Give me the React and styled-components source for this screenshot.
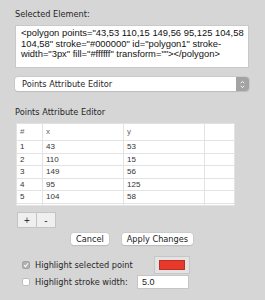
import React from 'react'
import styled, { createGlobalStyle } from 'styled-components'

const Global = createGlobalStyle`
  html, body {
    margin: 0;
    padding: 0;
    background: #d6d6d6;
  }
`

const Panel = styled.div`
  width: 265px;
  height: 300px;
  box-sizing: border-box;
  padding: 9px 16px 0 15px;
  display: flex;
  flex-direction: column;
  font-family: "DejaVu Sans", sans-serif;
  font-size: 8.2px;
  color: #262626;
  overflow: hidden;
`

const Label = styled.div`
  height: 10px;
  line-height: 10px;
  margin-top: ${props => props.top || 0}px;
`

const CodeBox = styled.div`
  margin-top: 6px;
  height: 43px;
  box-sizing: border-box;
  background: #fff;
  border: 1px solid #c9c9c9;
  padding: 2px 4px 0 5px;
  font-family: "Liberation Sans", Arial, sans-serif;
  font-size: 9.4px;
  line-height: 10.7px;
  color: #111;
  word-break: break-word;
`

const Select = styled.div`
  margin-top: 9px;
  height: 14px;
  display: flex;
  background: #fff;
  border-radius: 3px;
  box-shadow: 0 0 0 0.5px #bdbdbd, 0 1px 1px rgba(0,0,0,0.12);
  overflow: hidden;
`

const SelectText = styled.div`
  flex: 1;
  line-height: 14px;
  padding-left: 7px;
`

const Stepper = styled.div`
  width: 13px;
  background: #a3a3a3;
  display: flex;
  align-items: center;
  justify-content: center;
`

const TableWrap = styled.div`
  margin: 7px 0 0 2px;
  width: 217px;
  height: 81px;
  overflow: hidden;
  background: #fff;
  box-shadow: 0 0 0 1px #e2e2e2;
`

const Row = styled.div`
  display: grid;
  grid-template-columns: 26px 81px 81px 29px;
  height: ${props => (props.head ? 17 : 12.5)}px;
  box-sizing: border-box;
  border-bottom: ${props => (props.head ? 1.5 : 1.5)}px solid #e3e3e3;
`

const Cell = styled.div`
  padding-left: 3px;
  border-right: ${props => (props.last ? 0 : 1.5)}px solid #e3e3e3;
  font-family: "Liberation Sans", Arial, sans-serif;
  font-size: 8px;
  color: ${props => (props.head ? '#666' : '#333')};
  line-height: ${props => (props.head ? 16 : 11)}px;
`

const PlusMinus = styled.div`
  margin: 7px 0 0 2px;
  display: flex;
`

const SquareButton = styled.div`
  width: 20px;
  height: 16px;
  box-sizing: border-box;
  background: #efefef;
  border: 1px solid #c4c4c4;
  margin-left: ${props => (props.joined ? -1 : 0)}px;
  display: flex;
  align-items: center;
  justify-content: center;
  font-family: "Liberation Sans", Arial, sans-serif;
  font-size: 10px;
  color: #333;
`

const Actions = styled.div`
  margin-top: 5px;
  display: flex;
  justify-content: center;
  gap: 13px;
`

const Button = styled.div`
  height: 12px;
  padding: 0 ${props => props.pad}px;
  background: #fff;
  border-radius: 3px;
  box-shadow: 0 0 0 0.5px #c2c2c2, 0 1px 1px rgba(0,0,0,0.15);
  line-height: 12px;
  font-size: 8.2px;
  color: #222;
`

const OptionRow = styled.div`
  margin-top: ${props => props.top}px;
  margin-left: 7px;
  height: ${props => props.h}px;
  display: flex;
  align-items: center;
`

const Check = styled.div`
  width: 8px;
  height: 8px;
  box-sizing: border-box;
  border-radius: 2px;
  background: ${props => (props.checked ? '#b0b0b0' : '#fff')};
  border: 1px solid ${props => (props.checked ? '#a4a4a4' : '#bdbdbd')};
  display: flex;
  align-items: center;
  justify-content: center;
  margin-right: 5px;
`

const OptionText = styled.div`
  width: ${props => props.w}px;
`

const Swatch = styled.div`
  width: 36px;
  height: 18px;
  box-sizing: border-box;
  background: #e3e3e3;
  border: 1px solid #c6c6c6;
  padding: 3px 4px;
`

const SwatchFill = styled.div`
  height: 100%;
  background: #e8392b;
  border: 0.5px solid #b83024;
  box-sizing: border-box;
`

const NumberInput = styled.div`
  width: 52px;
  height: 14px;
  box-sizing: border-box;
  background: #fff;
  border: 1px solid #c6c6c6;
  padding-left: 4px;
  line-height: 13px;
  font-family: "Liberation Sans", Arial, sans-serif;
  font-size: 9px;
  color: #222;
`

const points = [
  [1, 43, 53],
  [2, 110, 15],
  [3, 149, 56],
  [4, 95, 125],
  [5, 104, 58],
  ['', '', ''],
]

const App = () => {
  return (
    <Panel>
      <Global />
      <Label>Selected Element:</Label>
      <CodeBox>
        &lt;polygon points="43,53 110,15 149,56 95,125 104,58 104,58" stroke="#000000" id="polygon1" stroke-width="3px" fill="#ffffff" transform=""&gt;&lt;/polygon&gt;
      </CodeBox>
      <Select>
        <SelectText>Points Attribute Editor</SelectText>
        <Stepper>
          <svg width="5" height="9" viewBox="0 0 5 9">
            <path d="M0.8 3.2 L2.5 1.4 L4.2 3.2 M0.8 5.8 L2.5 7.6 L4.2 5.8" stroke="#fff" strokeWidth="0.9" fill="none" />
          </svg>
        </Stepper>
      </Select>
      <Label top={16}>Points Attribute Editor</Label>
      <TableWrap>
        <Row head>
          <Cell head>#</Cell>
          <Cell head>x</Cell>
          <Cell head>y</Cell>
          <Cell head last />
        </Row>
        {points.map((p, i) => (
          <Row key={i}>
            <Cell>{p[0]}</Cell>
            <Cell>{p[1]}</Cell>
            <Cell>{p[2]}</Cell>
            <Cell last />
          </Row>
        ))}
      </TableWrap>
      <PlusMinus>
        <SquareButton>+</SquareButton>
        <SquareButton joined>-</SquareButton>
      </PlusMinus>
      <Actions>
        <Button pad={5}>Cancel</Button>
        <Button pad={5}>Apply Changes</Button>
      </Actions>
      <OptionRow top={11} h={18}>
        <Check checked>
          <svg width="6" height="6" viewBox="0 0 6 6">
            <path d="M1 3.2 L2.5 4.7 L5 1.2" stroke="#fff" strokeWidth="1.1" fill="none" />
          </svg>
        </Check>
        <OptionText w={119}>Highlight selected point</OptionText>
        <Swatch>
          <SwatchFill />
        </Swatch>
      </OptionRow>
      <OptionRow top={1} h={14}>
        <Check />
        <OptionText w={102}>Highlight stroke width:</OptionText>
        <NumberInput>5.0</NumberInput>
      </OptionRow>
    </Panel>
  )
}

export default App
